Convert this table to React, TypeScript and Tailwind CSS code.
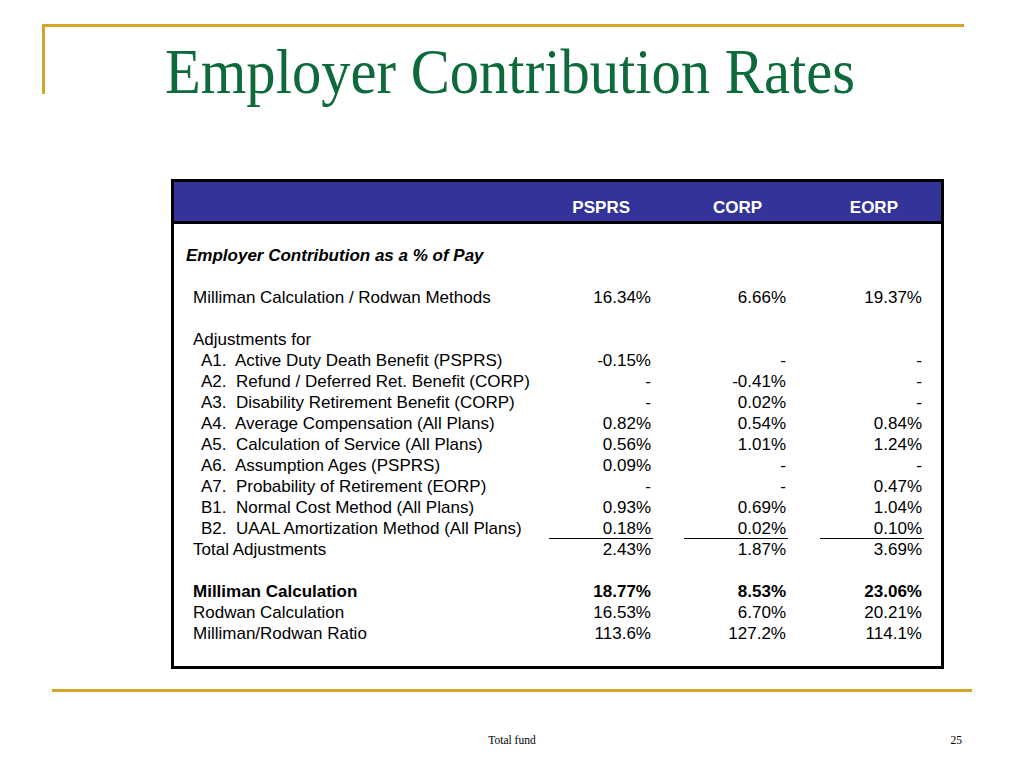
type Row = {
  label: string;
  values?: [string, string, string];
  indent?: "head" | "main" | "sub";
  bold?: boolean;
  underline?: boolean;
};

const rows: Row[] = [
  { label: "Employer Contribution as a % of Pay", indent: "head" },
  { label: "" },
  { label: "Milliman Calculation / Rodwan Methods", values: ["16.34%", "6.66%", "19.37%"] },
  { label: "" },
  { label: "Adjustments for" },
  { label: "A1.  Active Duty Death Benefit (PSPRS)", indent: "sub", values: ["-0.15%", "-", "-"] },
  { label: "A2.  Refund / Deferred Ret. Benefit (CORP)", indent: "sub", values: ["-", "-0.41%", "-"] },
  { label: "A3.  Disability Retirement Benefit (CORP)", indent: "sub", values: ["-", "0.02%", "-"] },
  { label: "A4.  Average Compensation (All Plans)", indent: "sub", values: ["0.82%", "0.54%", "0.84%"] },
  { label: "A5.  Calculation of Service (All Plans)", indent: "sub", values: ["0.56%", "1.01%", "1.24%"] },
  { label: "A6.  Assumption Ages (PSPRS)", indent: "sub", values: ["0.09%", "-", "-"] },
  { label: "A7.  Probability of Retirement (EORP)", indent: "sub", values: ["-", "-", "0.47%"] },
  { label: "B1.  Normal Cost Method (All Plans)", indent: "sub", values: ["0.93%", "0.69%", "1.04%"] },
  { label: "B2.  UAAL Amortization Method (All Plans)", indent: "sub", values: ["0.18%", "0.02%", "0.10%"], underline: true },
  { label: "Total Adjustments", values: ["2.43%", "1.87%", "3.69%"] },
  { label: "" },
  { label: "Milliman Calculation", values: ["18.77%", "8.53%", "23.06%"], bold: true },
  { label: "Rodwan Calculation", values: ["16.53%", "6.70%", "20.21%"] },
  { label: "Milliman/Rodwan Ratio", values: ["113.6%", "127.2%", "114.1%"] },
];

function RateRow({ row }: { row: Row }) {
  const labelClass =
    row.indent === "head"
      ? "pl-[12px] font-bold italic"
      : row.indent === "sub"
      ? "pl-[27px]"
      : "pl-[19px]";

  return (
    <div className={`grid grid-cols-[minmax(0,1fr)_136px_135px_136px] h-[21px] items-center leading-[21px] ${row.bold ? "font-bold" : ""}`}>
      <div className={`${labelClass} whitespace-pre`}>{row.label}</div>
      {row.values?.map((v, i) => (
        <div key={i} className="flex justify-end">
          {row.underline ? (
            <span className="w-[104px] -mr-[2px] pr-[2px] text-right border-b-[1.5px] border-black leading-[19px]">{v}</span>
          ) : (
            <span className="text-right">{v}</span>
          )}
        </div>
      ))}
    </div>
  );
}

export default function App() {
  return (
    <div className="w-[1024px] h-[768px] bg-white overflow-hidden pt-[24px]">
      <div className="ml-[42px] w-[922px] h-[70px] border-t-[3px] border-l-[3px] border-[#d4a52c]">
        <h1
          className="ml-[120px] pt-[14px] text-[63px] leading-[62px] text-[#0d6a3a] whitespace-nowrap origin-left scale-x-[0.93]"
          style={{ fontFamily: '"Liberation Serif", serif' }}
        >
          Employer Contribution Rates
        </h1>
      </div>

      <div
        className="mt-[85px] ml-[171px] w-[773px] h-[490px] border-[3px] border-black text-[17px] text-black"
        style={{ fontFamily: '"Liberation Sans", Arial, sans-serif' }}
      >
        <div className="h-[42px] bg-[#333399] border-b-[3px] border-black grid grid-cols-[minmax(0,1fr)_136px_135px_136px] pr-[19px] pt-[16px] text-white font-bold text-[17px] leading-[20px]">
          <div />
          <div className="text-right pr-[21px]">PSPRS</div>
          <div className="text-right pr-[24px]">CORP</div>
          <div className="text-right pr-[24px]">EORP</div>
        </div>
        <div className="pt-[21px] pr-[19px]">
          {rows.map((r, i) => (
            <RateRow key={i} row={r} />
          ))}
        </div>
      </div>

      <div className="mt-[20px] ml-[52px] w-[920px] h-[3px] bg-[#d4a52c]" />

      <div
        className="relative mt-[40px] h-[16px] text-[11.5px] leading-[16px] text-black"
        style={{ fontFamily: '"Liberation Serif", serif' }}
      >
        <div className="text-center">Total fund</div>
        <div className="absolute right-[62px] top-0">25</div>
      </div>
    </div>
  );
}
